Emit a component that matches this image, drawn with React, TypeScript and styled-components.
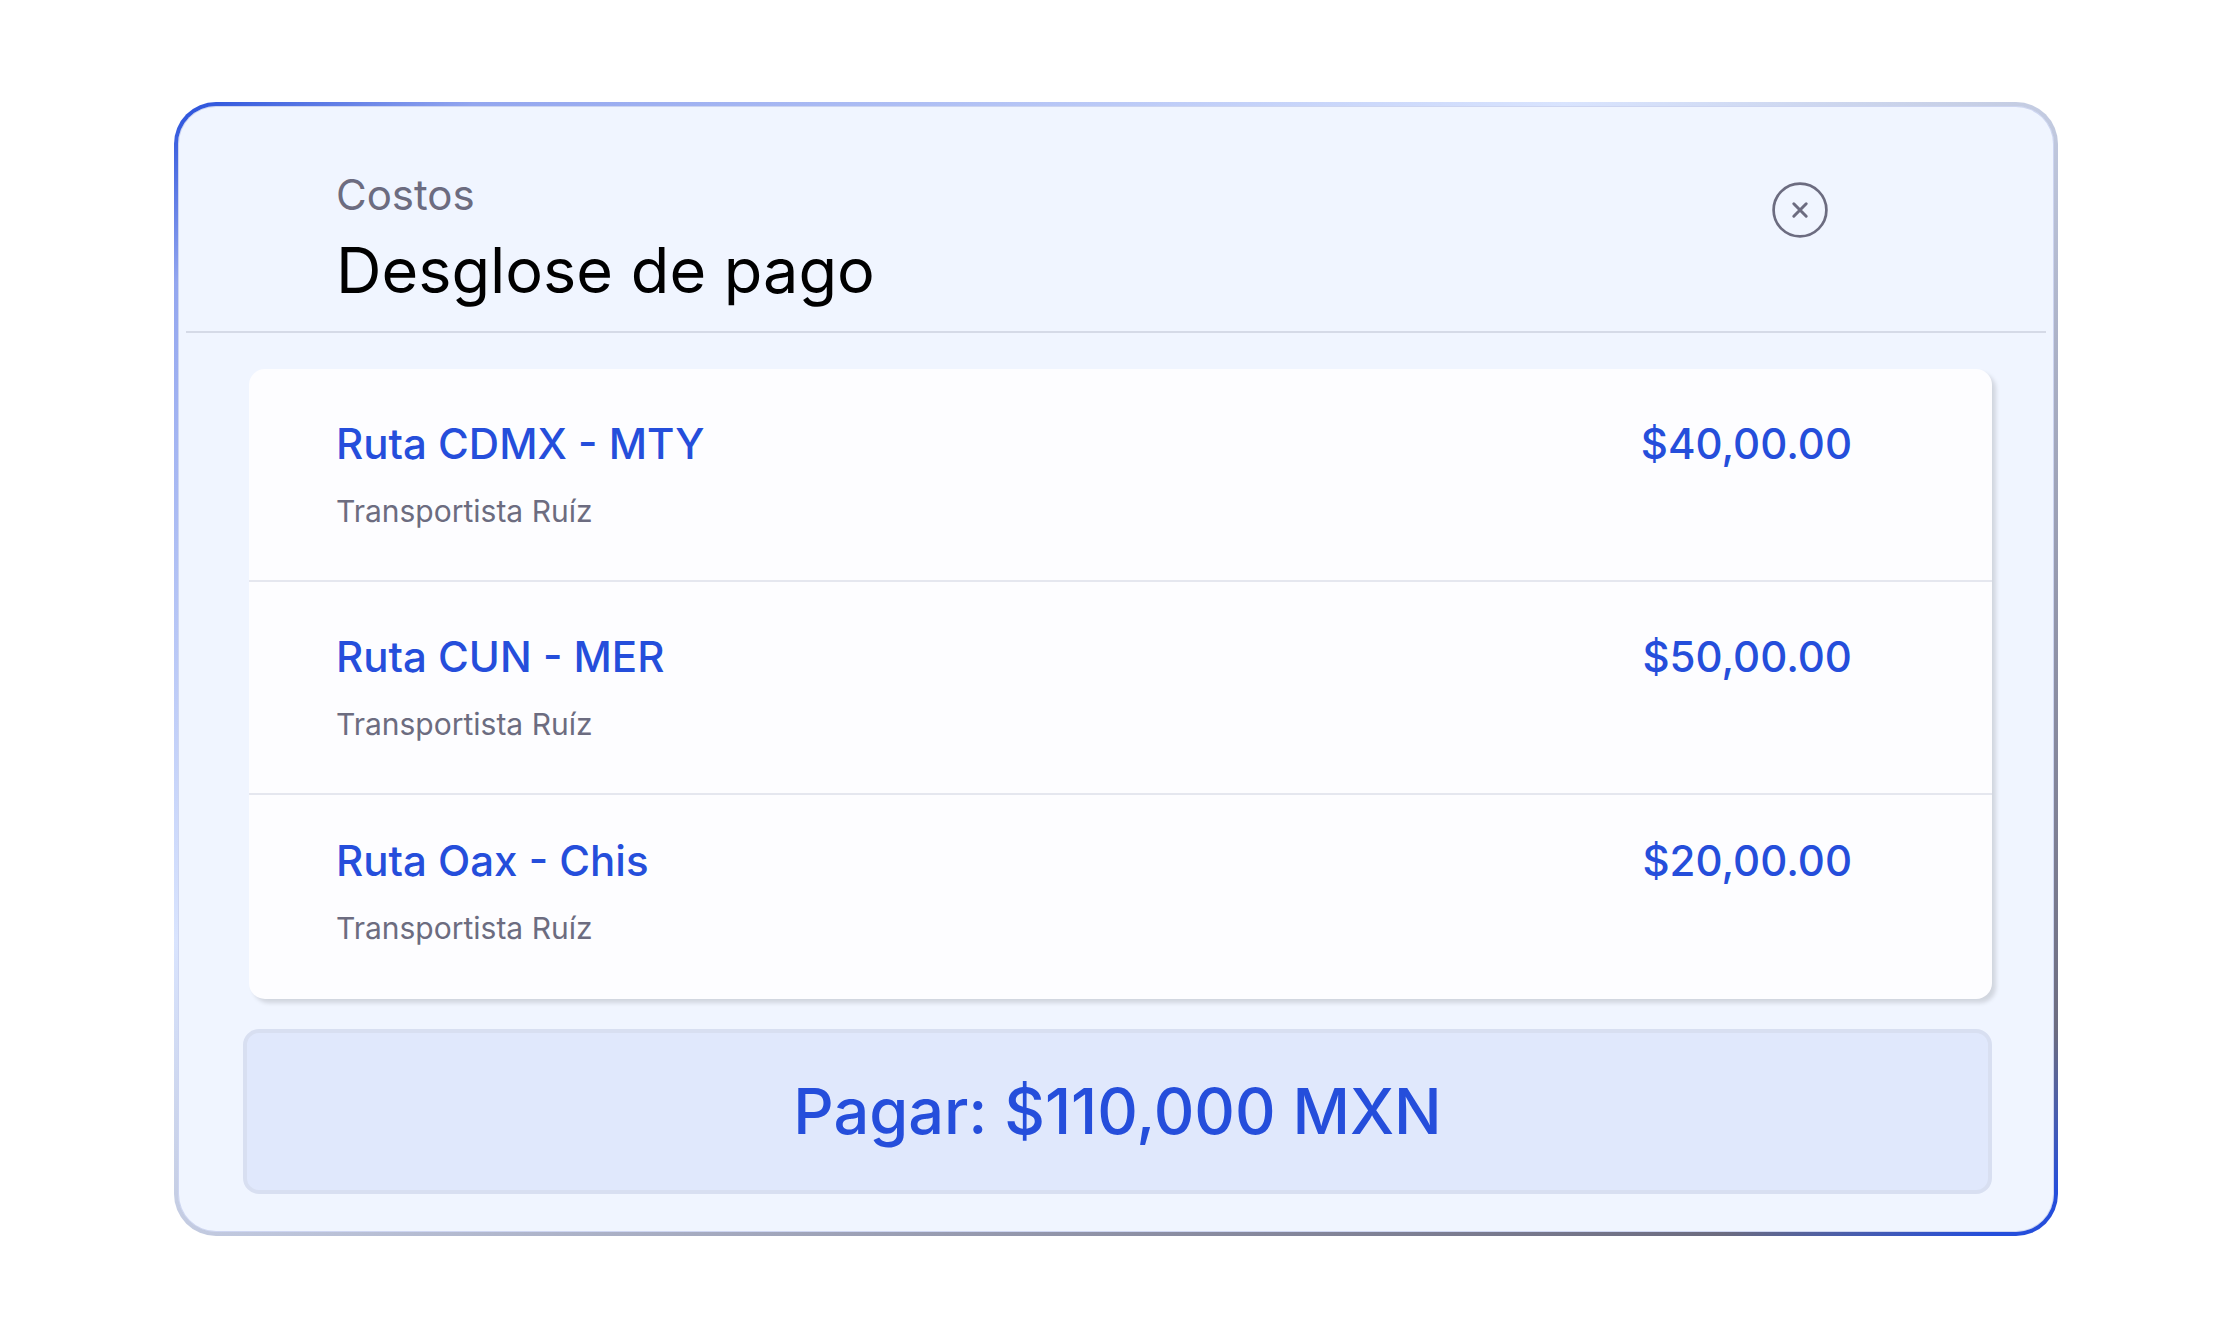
import React from "react";
import styled, { createGlobalStyle } from "styled-components";

const GlobalStyle = createGlobalStyle`
  * { box-sizing: border-box; }
  body {
    margin: 0;
    background: #ffffff;
    font-family: Inter, "Liberation Sans", sans-serif;
  }
`;

const Page = styled.main`
  padding: 102px 171px 99px 174px;
`;

const Dialog = styled.section`
  border: 4px solid transparent;
  border-radius: 42px;
  background:
    linear-gradient(#f0f5ff, #f0f5ff) padding-box,
    linear-gradient(
      to bottom right,
      #254edb 0%,
      #93a6ef 8%,
      #afbff4 20%,
      #d9e4fe 37%,
      #c3cbe1 50%,
      #6c6c80 91%,
      #254edb 98%
    ) border-box;
  box-shadow: inset 0 0 0 1px rgba(140, 156, 215, 0.35);
`;

const Header = styled.header`
  display: flex;
  justify-content: space-between;
  align-items: flex-start;
  margin: 0 8px;
  padding: 63px 218px 23px 150px;
  border-bottom: 2px solid #d5dae7;
`;

const Eyebrow = styled.p`
  margin: 0;
  font-size: 42px;
  line-height: 52px;
  color: #6c6c80;
`;

const Title = styled.h1`
  margin: 11px 0 0;
  font-size: 63px;
  line-height: 76px;
  font-weight: 400;
  color: #000000;
`;

const CloseButton = styled.button`
  display: flex;
  margin-top: 13px;
  padding: 0;
  border: 0;
  background: none;
  color: #6c6c80;
  cursor: pointer;
`;

const Body = styled.div`
  padding: 36px 62px 38px 65px;
`;

const Routes = styled.ul`
  margin: 0 0 30px 6px;
  padding: 0;
  list-style: none;
  border-radius: 16px;
  background: #fdfdff;
  box-shadow: 4px 4px 4px rgba(0, 0, 0, 0.13);
`;

const Route = styled.li`
  display: flex;
  justify-content: space-between;
  align-items: flex-start;
  padding: 49px 140px 49px 87px;

  & + & { border-top: 2px solid #e5e7ef; }
  &:last-child { padding-top: 40px; padding-bottom: 51px; }
`;

const RouteName = styled.h2`
  margin: 0;
  font-size: 42px;
  line-height: 52px;
  font-weight: 500;
  color: #254edb;
`;

const Carrier = styled.p`
  margin: 21px 0 0;
  font-size: 30px;
  line-height: 40px;
  color: #6c6c80;
`;

const Amount = styled.span`
  font-size: 42px;
  line-height: 52px;
  font-weight: 500;
  color: #254edb;
`;

const PayButton = styled.button`
  display: block;
  width: 100%;
  padding: 40px;
  border: 4px solid #d8dff1;
  border-radius: 16px;
  background: #e0e8fc;
  font-family: inherit;
  font-size: 63px;
  line-height: 77px;
  font-weight: 500;
  color: #254edb;
  cursor: pointer;
`;

const routes = [
  { name: "Ruta CDMX - MTY", carrier: "Transportista Ruíz", amount: "$40,00.00" },
  { name: "Ruta CUN - MER", carrier: "Transportista Ruíz", amount: "$50,00.00" },
  { name: "Ruta Oax - Chis", carrier: "Transportista Ruíz", amount: "$20,00.00" },
];

const CloseIcon = () => (
  <svg width="56" height="56" viewBox="0 0 56 56" fill="none" stroke="currentColor" strokeWidth="2.7" strokeLinecap="round" aria-hidden="true">
    <circle cx="28" cy="28" r="26.4" />
    <path strokeWidth="3" d="M21.8 21.8l12.4 12.4M34.2 21.8L21.8 34.2" />
  </svg>
);

export default function App() {
  return (
    <>
      <GlobalStyle />
      <Page>
        <Dialog role="dialog" aria-labelledby="dialog-title">
          <Header>
            <div>
              <Eyebrow>Costos</Eyebrow>
              <Title id="dialog-title">Desglose de pago</Title>
            </div>
            <CloseButton type="button" aria-label="Cerrar">
              <CloseIcon />
            </CloseButton>
          </Header>
          <Body>
            <Routes>
              {routes.map((route) => (
                <Route key={route.name}>
                  <div>
                    <RouteName>{route.name}</RouteName>
                    <Carrier>{route.carrier}</Carrier>
                  </div>
                  <Amount>{route.amount}</Amount>
                </Route>
              ))}
            </Routes>
            <PayButton type="button">Pagar: $110,000 MXN</PayButton>
          </Body>
        </Dialog>
      </Page>
    </>
  );
}
